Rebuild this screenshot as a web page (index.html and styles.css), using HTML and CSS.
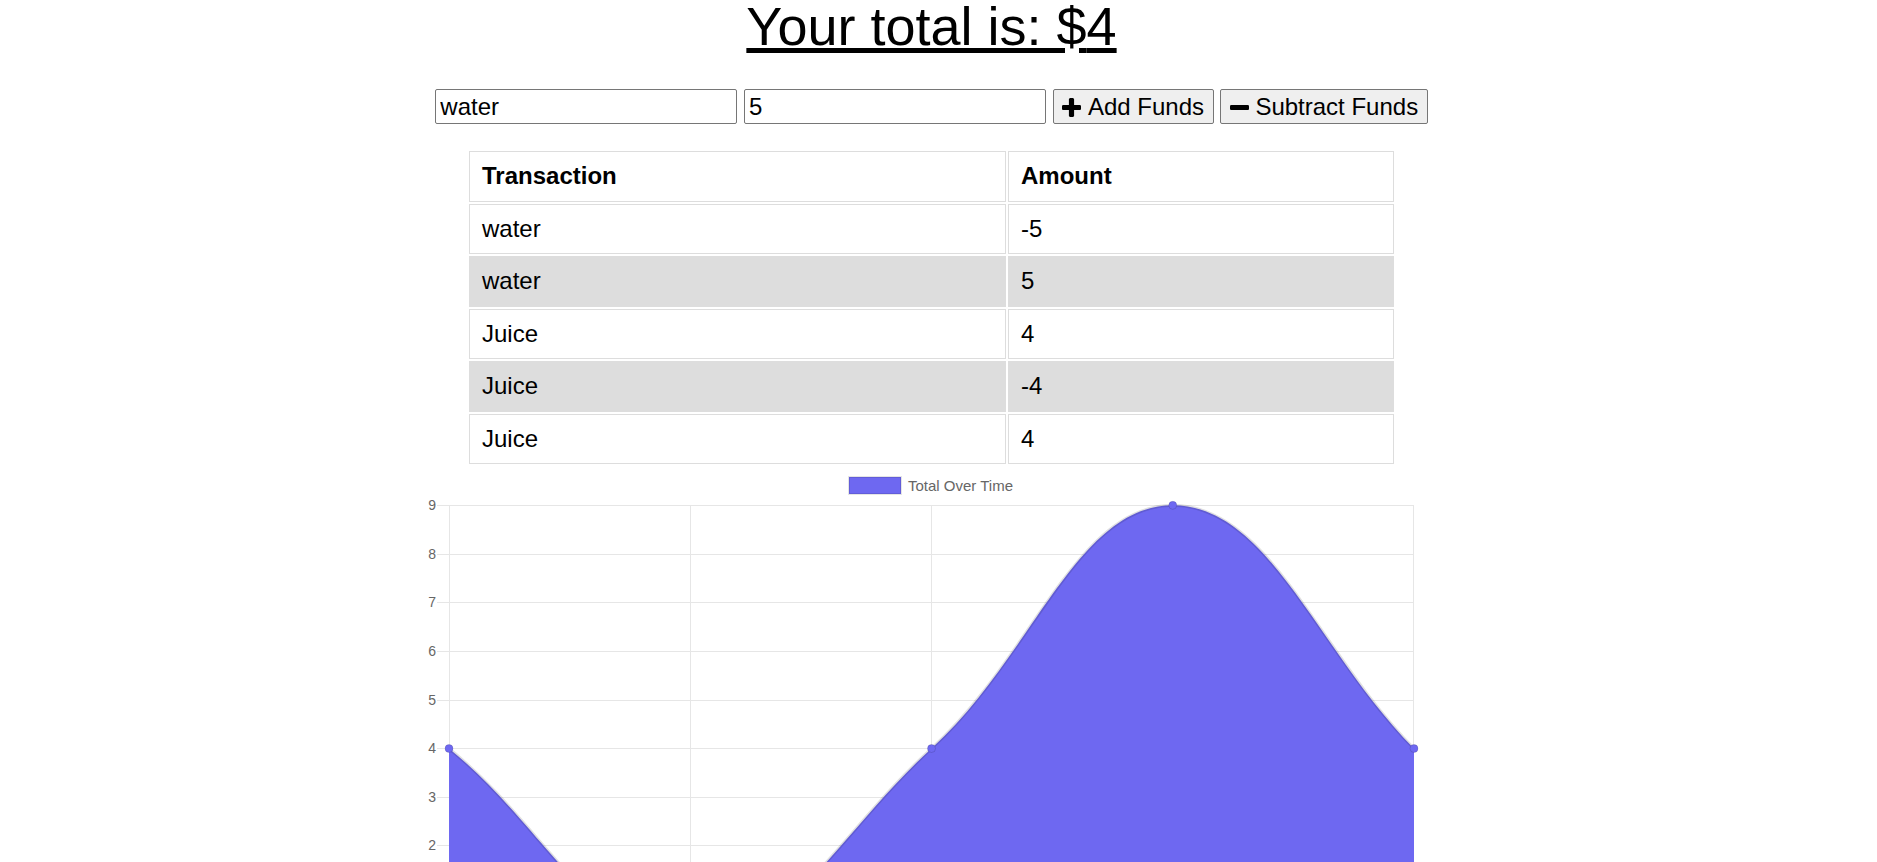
FILE: index.html
```html
<!DOCTYPE html>
<html lang="en">
<head>
<meta charset="utf-8">
<title>Budget Tracker</title>
<link rel="stylesheet" href="styles.css">
</head>
<body>
<div class="page">
  <h1 class="total">Your total is: $<span id="total">4</span></h1>

  <form class="funds">
    <input class="field" type="text" value="water" placeholder="Name of transaction">
    <input class="field" type="number" value="5" placeholder="Transaction amount">
    <button class="btn" type="button">
      <svg class="icon" viewBox="0 192 1408 1408"><path d="M1408 800v192q0 40-28 68t-68 28h-416v416q0 40-28 68t-68 28h-192q-40 0-68-28t-28-68v-416h-416q-40 0-68-28t-28-68v-192q0-40 28-68t68-28h416v-416q0-40 28-68t68-28h192q40 0 68 28t28 68v416h416q40 0 68 28t28 68z"/></svg>
      <span>Add Funds</span>
    </button>
    <button class="btn" type="button">
      <svg class="icon" viewBox="0 192 1408 1408"><path d="M1408 800v192q0 40-28 68t-68 28h-1216q-40 0-68-28t-28-68v-192q0-40 28-68t68-28h1216q40 0 68 28t28 68z"/></svg>
      <span>Subtract Funds</span>
    </button>
  </form>

  <table class="ledger">
    <thead>
      <tr><th>Transaction</th><th>Amount</th></tr>
    </thead>
    <tbody>
      <tr><td>water</td><td>-5</td></tr>
      <tr><td>water</td><td>5</td></tr>
      <tr><td>Juice</td><td>4</td></tr>
      <tr><td>Juice</td><td>-4</td></tr>
      <tr><td>Juice</td><td>4</td></tr>
    </tbody>
  </table>

  <svg class="chart" width="1031" height="500" viewBox="416 466 1031 500">
    <rect class="legend-box" x="849" y="477" width="52" height="17"/>
    <text class="legend-text" x="908" y="491">Total Over Time</text>

    <g class="grid">
      <line x1="437" x2="1414" y1="505.5" y2="505.5"/>
      <line x1="437" x2="1414" y1="554.5" y2="554.5"/>
      <line x1="437" x2="1414" y1="602.5" y2="602.5"/>
      <line x1="437" x2="1414" y1="651.5" y2="651.5"/>
      <line x1="437" x2="1414" y1="700.5" y2="700.5"/>
      <line x1="437" x2="1414" y1="748.5" y2="748.5"/>
      <line x1="437" x2="1414" y1="797.5" y2="797.5"/>
      <line x1="437" x2="1414" y1="845.5" y2="845.5"/>
      <line x1="437" x2="1414" y1="894.5" y2="894.5"/>
      <line x1="437" x2="1414" y1="943.5" y2="943.5"/>
      <line x1="449.5" x2="449.5" y1="505" y2="955"/>
      <line x1="690.5" x2="690.5" y1="505" y2="955"/>
      <line x1="931.5" x2="931.5" y1="505" y2="955"/>
      <line x1="1172.5" x2="1172.5" y1="505" y2="955"/>
      <line x1="1413.5" x2="1413.5" y1="505" y2="955"/>
    </g>

    <g class="ticks">
      <text x="436" y="510">9</text>
      <text x="436" y="559">8</text>
      <text x="436" y="607">7</text>
      <text x="436" y="656">6</text>
      <text x="436" y="705">5</text>
      <text x="436" y="753">4</text>
      <text x="436" y="802">3</text>
      <text x="436" y="850">2</text>
      <text x="436" y="899">1</text>
      <text x="436" y="948">0</text>
    </g>

    <path class="area" d="M449,748.5 C545.5,826.3 593.75,943 690.25,943 C786.75,943 839.8,831.7 931.5,748.5 C1032.8,656.6 1076.25,505.3 1172.75,505.3 C1269.25,505.3 1317.5,651.2 1414,748.5 L1414,943 L449,943 Z"/>
    <path class="line" d="M449,748.5 C545.5,826.3 593.75,943 690.25,943 C786.75,943 839.8,831.7 931.5,748.5 C1032.8,656.6 1076.25,505.3 1172.75,505.3 C1269.25,505.3 1317.5,651.2 1414,748.5"/>

    <g class="points">
      <circle cx="449" cy="748.5" r="4"/>
      <circle cx="690.25" cy="943" r="4"/>
      <circle cx="931.5" cy="748.5" r="4"/>
      <circle cx="1172.75" cy="505.3" r="4"/>
      <circle cx="1414" cy="748.5" r="4"/>
    </g>
  </svg>
</div>
</body>
</html>
```

FILE: styles.css
```css
html, body {
  margin: 0;
  padding: 0;
  background: #fff;
}

body {
  font-family: "Liberation Sans", Arial, Helvetica, sans-serif;
  font-size: 24px;
  color: #000;
}

.page {
  margin-right: 14px;
  text-align: center;
}

.total {
  margin: 0;
  font-size: 54px;
  line-height: 52px;
  font-weight: 400;
  text-decoration: underline;
}

.funds {
  margin: 37px 0 0;
  display: flex;
  justify-content: center;
  gap: 6.7px;
}

.field {
  box-sizing: border-box;
  width: 302px;
  height: 35px;
  margin: 0;
  padding: 2px 4px;
  border: 1px solid #767676;
  border-radius: 2px;
  font: inherit;
  color: #000;
  background: #fff;
  -moz-appearance: textfield;
}

.field::-webkit-outer-spin-button,
.field::-webkit-inner-spin-button {
  -webkit-appearance: none;
  margin: 0;
}

.btn {
  box-sizing: border-box;
  height: 35px;
  margin: 0;
  padding: 1px 8.5px 0;
  display: inline-flex;
  align-items: center;
  gap: 6.7px;
  border: 1px solid #767676;
  border-radius: 2px;
  background: #efefef;
  font: inherit;
  color: #000;
}

.icon {
  width: 19px;
  height: 19px;
  fill: #000;
  flex: none;
}

.ledger {
  width: 929px;
  margin: 25px auto 0;
  border-spacing: 2px;
  text-align: left;
}

.ledger th,
.ledger td {
  border: 1px solid #ddd;
  padding: 10px 12px;
  line-height: 28.5px;
}

.ledger th {
  font-weight: 700;
}

.ledger th:first-child {
  width: 511px;
}

.ledger tbody tr:nth-child(even) td {
  background: #ddd;
}

.chart {
  display: block;
  margin: 0 auto;
  overflow: visible;
}

.legend-box {
  fill: #6e68f1;
  stroke: rgba(0, 0, 0, 0.1);
  stroke-width: 2;
}

.legend-text {
  font-family: "Liberation Sans", Arial, sans-serif;
  font-size: 15px;
  fill: #666;
}

.grid line {
  stroke: #e6e6e6;
  stroke-width: 1;
}

.ticks text {
  font-family: "Liberation Sans", Arial, sans-serif;
  font-size: 14px;
  fill: #666;
  text-anchor: end;
}

.area {
  fill: #6e68f1;
}

.line {
  fill: none;
  stroke: rgba(0, 0, 0, 0.12);
  stroke-width: 3;
}

.points circle {
  fill: #6e68f1;
  stroke: rgba(0, 0, 0, 0.12);
  stroke-width: 1;
}
```
